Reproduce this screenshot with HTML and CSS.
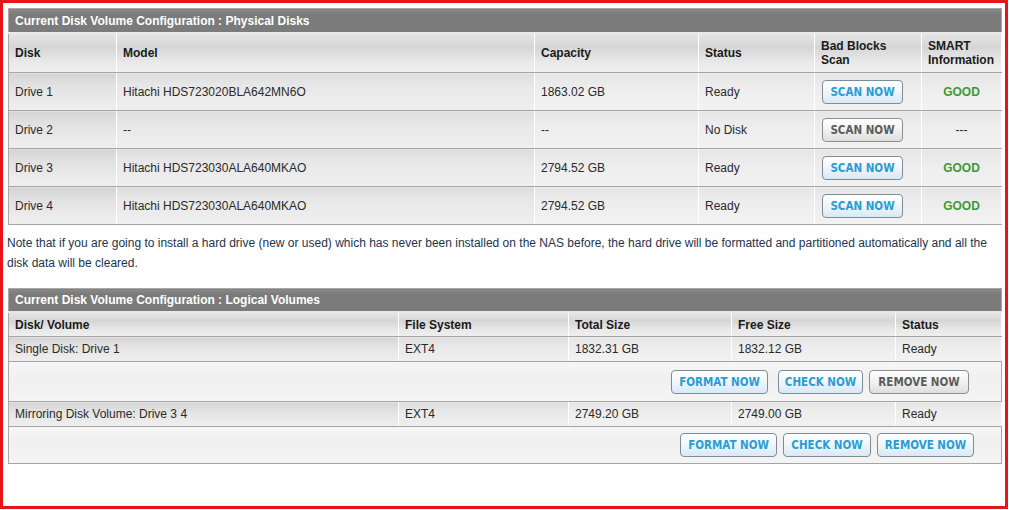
FILE: index.html
```html
<!DOCTYPE html>
<html>
<head>
<meta charset="utf-8">
<link rel="stylesheet" href="styles.css">
</head>
<body>
<div class="frame">
  <table class="grid phys">
    <colgroup>
      <col style="width:108px"><col style="width:418px"><col style="width:164px"><col style="width:116px"><col style="width:107px"><col style="width:80px">
    </colgroup>
    <tr><td class="title" colspan="6">Current Disk Volume Configuration : Physical Disks</td></tr>
    <tr class="head">
      <th>Disk</th><th>Model</th><th>Capacity</th><th>Status</th><th>Bad Blocks<br>Scan</th><th>SMART<br>Information</th>
    </tr>
    <tr class="row">
      <td class="c1">Drive 1</td><td class="c2">Hitachi HDS723020BLA642MN6O</td><td>1863.02 GB</td><td>Ready</td>
      <td><span class="btn blue scan">SCAN NOW</span></td><td class="good">GOOD</td>
    </tr>
    <tr class="row">
      <td class="c1">Drive 2</td><td class="c2">--</td><td>--</td><td>No Disk</td>
      <td><span class="btn gray scan">SCAN NOW</span></td><td class="none">---</td>
    </tr>
    <tr class="row">
      <td class="c1">Drive 3</td><td class="c2">Hitachi HDS723030ALA640MKAO</td><td>2794.52 GB</td><td>Ready</td>
      <td><span class="btn blue scan">SCAN NOW</span></td><td class="good">GOOD</td>
    </tr>
    <tr class="row">
      <td class="c1">Drive 4</td><td class="c2">Hitachi HDS723030ALA640MKAO</td><td>2794.52 GB</td><td>Ready</td>
      <td><span class="btn blue scan">SCAN NOW</span></td><td class="good">GOOD</td>
    </tr>
  </table>

  <p class="note">Note that if you are going to install a hard drive (new or used) which has never been installed on the NAS before, the hard drive will be formatted and partitioned automatically and all the disk data will be cleared.</p>

  <table class="grid logi">
    <colgroup>
      <col style="width:390px"><col style="width:170px"><col style="width:163px"><col style="width:164px"><col style="width:106px">
    </colgroup>
    <tr><td class="title" colspan="5">Current Disk Volume Configuration : Logical Volumes</td></tr>
    <tr class="head">
      <th>Disk/ Volume</th><th>File System</th><th>Total Size</th><th>Free Size</th><th>Status</th>
    </tr>
    <tr class="row">
      <td class="c1">Single Disk: Drive 1</td><td class="c2">EXT4</td><td>1832.31 GB</td><td>1832.12 GB</td><td>Ready</td>
    </tr>
    <tr class="actions a1">
      <td colspan="5">
        <div class="btns">
          <span class="btn blue fmt">FORMAT NOW</span>
          <span class="btn blue chk">CHECK NOW</span>
          <span class="btn gray rem">REMOVE NOW</span>
        </div>
      </td>
    </tr>
    <tr class="row">
      <td class="c1">Mirroring Disk Volume: Drive 3 4</td><td class="c2">EXT4</td><td>2749.20 GB</td><td>2749.00 GB</td><td>Ready</td>
    </tr>
    <tr class="actions a2">
      <td colspan="5">
        <div class="btns">
          <span class="btn blue fmt">FORMAT NOW</span>
          <span class="btn blue chk2">CHECK NOW</span>
          <span class="btn blue rem2">REMOVE NOW</span>
        </div>
      </td>
    </tr>
  </table>
</div>
</body>
</html>
```

FILE: styles.css
```css
html, body {
  margin: 0;
  padding: 0;
  background: #ffffff;
}
.frame {
  box-sizing: border-box;
  width: 1008px;
  height: 509px;
  border: 3px solid #e8141a;
  padding: 5px 0 0 5px;
  font-family: "Liberation Sans", Arial, sans-serif;
  font-size: 12px;
  color: #222222;
}
.grid {
  width: 993px;
  border-collapse: collapse;
  table-layout: fixed;
  border: 1px solid #a8a8a8;
}
.title {
  background: linear-gradient(#8a8a8a, #7b7b7b 20%, #7b7b7b);
  color: #ffffff;
  font-weight: bold;
  height: 22px;
  padding: 0 6px;
  border-bottom: 2px solid #e9e9e9;
}
.phys .title { height: 23px; }
.head th {
  text-align: left;
  font-weight: bold;
  color: #1a1a1a;
  padding: 0 6px;
  line-height: 14px;
  background: linear-gradient(#e4e4e4, #d6d6d6 35%, #e9e9e9 75%, #eeeeee);
  border-right: 1px solid #ffffff;
  border-bottom: 1px solid #a5a5a5;
}
.phys .head th { height: 38px; }
.logi .head th { height: 23px; }
.row td {
  padding: 0 6px;
  color: #2a2a2a;
  background: linear-gradient(#e6e6e6, #ededed 40%, #f2f2f2);
  border-right: 1px solid #ffffff;
  border-bottom: 1px solid #a5a5a5;
}
.row td.c1 {
  background: linear-gradient(#d4d4d4, #e2e2e2 35%, #ececec 80%, #eeeeee);
}
.row td.c2 {
  background: linear-gradient(#dddddd, #e8e8e8 35%, #efefef);
}
.phys .row td { height: 37px; }
.logi .row td { height: 24px; }
.row td.good {
  color: #3b9a37;
  font-weight: bold;
  text-align: center;
}
.row td.none { text-align: center; }
.actions td {
  background: linear-gradient(#f6f6f6, #f0f0f0 40%, #f4f4f4);
  border-bottom: 1px solid #a5a5a5;
  padding: 0;
}
.a1 td { height: 39px; }
.a2 td { height: 36px; }
.btns {
  display: flex;
  justify-content: flex-end;
  align-items: center;
  gap: 6px;
}
.a1 .btns { padding-right: 32px; }
.a2 .btns { padding-right: 27px; }
.btn {
  box-sizing: border-box;
  display: inline-flex;
  align-items: center;
  justify-content: center;
  height: 24px;
  border: 1px solid #7f8c96;
  border-radius: 4px;
  font-family: "DejaVu Sans Condensed", "DejaVu Sans", sans-serif;
  font-stretch: condensed;
  font-weight: bold;
  font-size: 11.5px;
  letter-spacing: 0;
}
.btn.blue {
  color: #2a9dd2;
  background: linear-gradient(#ffffff, #f1f7fb 45%, #d9e9f4);
}
.btn.gray {
  color: #5c5c5c;
  border-color: #8e8e8e;
  background: linear-gradient(#ffffff, #f3f3f3 45%, #dedede);
}
.scan { width: 81px; margin-left: 1px; }
.fmt { width: 97px; }
.chk { width: 85px; margin-left: 4px; }
.chk2 { width: 88px; }
.rem { width: 100px; }
.rem2 { width: 97px; }
.note {
  margin: 8px 0 15px -1px;
  width: 990px;
  line-height: 20px;
  color: #22334d;
  font-size: 12px;
}
```
